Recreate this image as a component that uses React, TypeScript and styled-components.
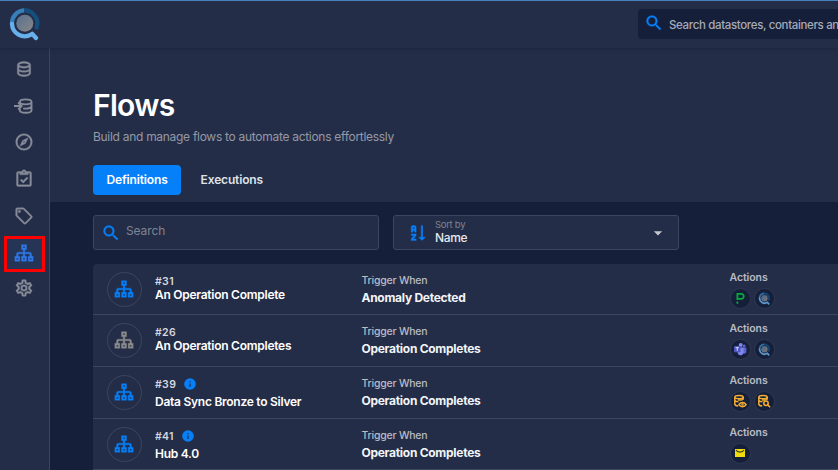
import React from "react";
import styled, { createGlobalStyle, css } from "styled-components";

const color = {
  surface: "#242d48",
  deep: "#161f3a",
  line: "#3c455e",
  blue: "#0580f9",
  grey: "#868b98",
};

const GlobalStyle = createGlobalStyle`
  *, *::before, *::after { box-sizing: border-box; }
  body {
    margin: 0;
    overflow: hidden;
    background: ${color.deep};
    color: #fff;
    font-family: Inter, "Noto Sans", sans-serif;
  }
  svg { flex-shrink: 0; }
`;

const Page = styled.div`
  display: flex;
  flex-direction: column;
  width: 100vw;
  height: 100vh;
  overflow: hidden;
`;

const Header = styled.header`
  display: flex;
  flex: 0 0 48px;
  align-items: flex-start;
  justify-content: space-between;
  background: ${color.surface};
  border-top: 1px solid #4a80bb;
  box-shadow: 0 1px 4px rgba(15, 20, 40, 0.35);
  z-index: 1;
`;

const LogoSlot = styled.div`
  display: flex;
  padding: 6px 0 0 8px;
`;

const GlobalSearch = styled.div`
  display: flex;
  align-items: center;
  width: 200px;
  height: 30px;
  margin-top: 8px;
  padding-left: 6px;
  overflow: hidden;
  border-radius: 4px 0 0 4px;
  background: ${color.deep};
  color: #a6abb8;
  font-size: 11.5px;
  font-weight: 500;
  letter-spacing: -0.35px;
  line-height: 16px;
  white-space: nowrap;

  svg { margin: -2px 5px 0 0; }
  span { padding-top: 2px; }
`;

const Body = styled.div`
  display: flex;
  flex: 1;
  min-height: 0;
`;

const Sidebar = styled.nav`
  display: flex;
  flex: 0 0 50px;
  flex-direction: column;
  align-items: center;
  padding-top: 2.5px;
  background: ${color.surface};
  border-right: 1px solid ${color.line};
`;

const NavItem = styled.a<{ $active?: boolean }>`
  display: flex;
  align-items: center;
  justify-content: center;
  width: 41px;
  height: 36.7px;
  color: ${(p) => (p.$active ? "#2f78ea" : color.grey)};

  svg {
    margin-right: 1px;
    stroke: currentColor;
    stroke-width: 0.4;
  }
  ${(p) =>
    p.$active &&
    css`
      height: 36px;
      margin: 2px 0 -2px;
      padding-bottom: 2px;
      border: 3px solid #fe0000;
      background: #263555;
    `}
`;

const Main = styled.main`
  display: flex;
  flex: 1;
  flex-direction: column;
  min-width: 0;
`;

const Hero = styled.section`
  flex: 0 0 154px;
  padding: 40px 0 0 43px;
  background: ${color.surface};
`;

const Title = styled.h1`
  margin: 0;
  font-size: 30px;
  font-weight: 600;
  letter-spacing: -0.7px;
  line-height: 34px;
`;

const Subtitle = styled.p`
  margin: 6px 0 0;
  color: #9499a5;
  font-size: 12px;
  letter-spacing: -0.29px;
  line-height: 18px;
`;

const Tabs = styled.div`
  display: flex;
  gap: 6px;
  margin-top: 19px;
`;

const Tab = styled.button<{ $active?: boolean }>`
  height: 30px;
  padding: 0 13.5px;
  border: 0;
  border-radius: 4px;
  background: ${(p) => (p.$active ? color.blue : "transparent")};
  color: ${(p) => (p.$active ? "#fff" : "#dfe2e8")};
  font: 600 12px/30px Inter, sans-serif;
  letter-spacing: -0.15px;
`;

const Content = styled.section`
  display: flex;
  flex: 1;
  flex-direction: column;
  min-height: 0;
  padding: 13px 0 0 43px;
`;

const Filters = styled.div`
  display: flex;
  gap: 14px;
`;

const Field = styled.div`
  display: flex;
  align-items: center;
  width: 286px;
  height: 35px;
  border: 1px solid ${color.line};
  border-radius: 3px;
  background: ${color.surface};
`;

const SearchField = styled(Field)`
  padding-left: 7px;
  color: #7f8492;
  font-size: 12px;
  letter-spacing: -0.1px;

  svg { margin-right: 5px; }
  span { margin-top: -4px; }
`;

const SortField = styled(Field)`
  padding: 0 10px 0 13px;
  color: #c3c7cf;
`;

const SortText = styled.div`
  display: flex;
  flex: 1;
  flex-direction: column;
  padding: 0 0 1px 8px;
`;

const SortLabel = styled.span`
  color: #7f8492;
  font-size: 9.5px;
  letter-spacing: -0.3px;
  line-height: 12px;
`;

const SortValue = styled.span`
  color: #e6e8ec;
  font-size: 12px;
  font-weight: 500;
  letter-spacing: -0.35px;
  line-height: 14px;
`;

const List = styled.div`
  display: flex;
  flex-direction: column;
  margin-top: 14px;
  border-radius: 4px 0 0 0;
  background: ${color.surface};
`;

const Row = styled.div<{ $height: number }>`
  display: grid;
  grid-template-columns: 48px 206.5px 368px 1fr;
  flex: 0 0 ${(p) => p.$height}px;
  height: ${(p) => p.$height}px;
  padding-left: 14px;
  border-bottom: 1px solid ${color.line};
`;

const FlowBadge = styled.div<{ $muted?: boolean }>`
  display: flex;
  align-items: center;
  justify-content: center;
  width: 35px;
  height: 35px;
  align-self: center;
  border: 1px solid ${color.line};
  border-radius: 50%;
  color: ${(p) => (p.$muted ? "#8b8b8b" : color.blue)};

  svg {
    margin: -1px 1px 0 0;
    stroke: currentColor;
    stroke-width: 0.4;
  }
`;

const FlowText = styled.div<{ $info?: boolean }>`
  display: flex;
  flex-direction: column;
  gap: ${(p) => (p.$info ? 3.5 : 0)}px;
  padding-top: 11px;
`;

const FlowId = styled.div`
  display: flex;
  gap: 7px;
  height: 13px;
  color: #d5d8de;
  font-size: 10.5px;
  font-weight: 600;
  letter-spacing: 0.35px;
  line-height: 14px;

  svg { margin-top: -1.5px; }
`;

const FlowName = styled.div`
  font-size: 12px;
  font-weight: 600;
  letter-spacing: -0.26px;
  line-height: 13px;
  white-space: nowrap;
`;

const Trigger = styled.div`
  padding-top: 9px;
  white-space: nowrap;
`;

const Label = styled.div<{ $tight?: boolean }>`
  color: #b7bbc4;
  font-size: 10.5px;
  font-weight: ${(p) => (p.$tight ? 500 : 600)};
  letter-spacing: ${(p) => (p.$tight ? -0.22 : -0.08)}px;
  line-height: 15px;
`;

const TriggerValue = styled.div`
  margin-top: 2px;
  color: #f3f4f6;
  font-size: 12px;
  font-weight: 700;
  letter-spacing: -0.28px;
  line-height: 16px;
`;

const Actions = styled.div`
  padding-top: 5.5px;
`;

const ActionList = styled.div`
  display: flex;
  gap: 3px;
  margin-top: 3px;
`;

const ActionBadge = styled.div`
  display: flex;
  align-items: center;
  justify-content: center;
  width: 21px;
  height: 21px;
  border: 1px solid #303950;
  border-radius: 50%;
  background: ${color.deep};
`;

const paths = {
  database:
    "M12 3C7.58 3 4 4.79 4 7V17C4 19.21 7.59 21 12 21S20 19.21 20 17V7C20 4.79 16.42 3 12 3M18 17C18 17.5 15.87 19 12 19S6 17.5 6 17V14.77C7.61 15.55 9.72 16 12 16S16.39 15.55 18 14.77V17M18 12.45C16.7 13.4 14.42 14 12 14C9.58 14 7.3 13.4 6 12.45V9.64C7.47 10.47 9.61 11 12 11C14.39 11 16.53 10.47 18 9.64V12.45M12 9C8.13 9 6 7.5 6 7S8.13 5 12 5C15.87 5 18 6.5 18 7S15.87 9 12 9Z",
  compass:
    "M7,17L10.2,10.2L17,7L13.8,13.8L7,17M12,11.1A0.9,0.9 0 0,0 11.1,12A0.9,0.9 0 0,0 12,12.9A0.9,0.9 0 0,0 12.9,12A0.9,0.9 0 0,0 12,11.1M12,2A10,10 0 0,1 22,12A10,10 0 0,1 12,22A10,10 0 0,1 2,12A10,10 0 0,1 12,2M12,4A8,8 0 0,0 4,12A8,8 0 0,0 12,20A8,8 0 0,0 20,12A8,8 0 0,0 12,4Z",
  clipboard:
    "M19,3H14.82C14.4,1.84 13.3,1 12,1C10.7,1 9.6,1.84 9.18,3H5A2,2 0 0,0 3,5V19A2,2 0 0,0 5,21H19A2,2 0 0,0 21,19V5A2,2 0 0,0 19,3M12,3A1,1 0 0,1 13,4A1,1 0 0,1 12,5A1,1 0 0,1 11,4A1,1 0 0,1 12,3M7,7H17V5H19V19H5V5H7V7M7.5,13.5L9,12L11,14L15.5,9.5L17,11L11,17L7.5,13.5Z",
  tag: "M21.41 11.58L12.41 2.58A2 2 0 0 0 11 2H4A2 2 0 0 0 2 4V11A2 2 0 0 0 2.59 12.42L11.59 21.42A2 2 0 0 0 13 22A2 2 0 0 0 14.41 21.41L21.41 14.41A2 2 0 0 0 22 13A2 2 0 0 0 21.41 11.58M13 20L4 11V4H11L20 13M6.5 5A1.5 1.5 0 1 1 5 6.5A1.5 1.5 0 0 1 6.5 5Z",
  sitemap:
    "M9 2V8H11V11H5C3.89 11 3 11.89 3 13V16H1V22H7V16H5V13H11V16H9V22H15V16H13V13H19V16H17V22H23V16H21V13C21 11.89 20.11 11 19 11H13V8H15V2H9M11 4H13V6H11V4M3 18H5V20H3V18M11 18H13V20H11V18M19 18H21V20H19V18Z",
  cog: "M12,8A4,4 0 0,1 16,12A4,4 0 0,1 12,16A4,4 0 0,1 8,12A4,4 0 0,1 12,8M12,10A2,2 0 0,0 10,12A2,2 0 0,0 12,14A2,2 0 0,0 14,12A2,2 0 0,0 12,10M10,22C9.75,22 9.54,21.82 9.5,21.58L9.13,18.93C8.5,18.68 7.96,18.34 7.44,17.94L4.95,18.95C4.73,19.03 4.46,18.95 4.34,18.73L2.34,15.27C2.21,15.05 2.27,14.78 2.46,14.63L4.57,12.97L4.5,12L4.57,11L2.46,9.37C2.27,9.22 2.21,8.95 2.34,8.73L4.34,5.27C4.46,5.05 4.73,4.96 4.95,5.05L7.44,6.05C7.96,5.66 8.5,5.32 9.13,5.07L9.5,2.42C9.54,2.18 9.75,2 10,2H14C14.25,2 14.46,2.18 14.5,2.42L14.87,5.07C15.5,5.32 16.04,5.66 16.56,6.05L19.05,5.05C19.27,4.96 19.54,5.05 19.66,5.27L21.66,8.73C21.79,8.95 21.73,9.22 21.54,9.37L19.43,11L19.5,12L19.43,13L21.54,14.63C21.73,14.78 21.79,15.05 21.66,15.27L19.66,18.73C19.54,18.95 19.27,19.04 19.05,18.95L16.56,17.95C16.04,18.34 15.5,18.68 14.87,18.93L14.5,21.58C14.46,21.82 14.25,22 14,22H10M11.25,4L10.88,6.61C9.68,6.86 8.62,7.5 7.85,8.39L5.44,7.35L4.69,8.65L6.8,10.2C6.4,11.37 6.4,12.64 6.8,13.8L4.68,15.36L5.43,16.66L7.86,15.62C8.63,16.5 9.68,17.14 10.87,17.38L11.24,20H12.76L13.13,17.39C14.32,17.14 15.37,16.5 16.14,15.62L18.57,16.66L19.32,15.36L17.2,13.81C17.6,12.64 17.6,11.37 17.2,10.2L19.31,8.65L18.56,7.35L16.15,8.39C15.38,7.5 14.32,6.86 13.12,6.62L12.75,4H11.25Z",
  magnify:
    "M9.5,3A6.5,6.5 0 0,1 16,9.5C16,11.11 15.41,12.59 14.44,13.73L14.71,14H15.5L20.5,19L19,20.5L14,15.5V14.71L13.73,14.44C12.59,15.41 11.11,16 9.5,16A6.5,6.5 0 0,1 3,9.5A6.5,6.5 0 0,1 9.5,3M9.5,5C7,5 5,7 5,9.5C5,12 7,14 9.5,14C12,14 14,12 14,9.5C14,7 12,5 9.5,5Z",
  sort: "M19 17H22L18 21L14 17H17V3H19M11 13V15L7.67 19H11V21H5V19L8.33 15H5V13M9 3H7C5.9 3 5 3.9 5 5V11H7V9H9V11H11V5C11 3.9 10.11 3 9 3M9 7H7V5H9Z",
  info: "M13,9H11V7H13M13,17H11V11H13M12,2A10,10 0 0,0 2,12A10,10 0 0,0 12,22A10,10 0 0,0 22,12A10,10 0 0,0 12,2Z",
  menuDown: "M7,10L12,15L17,10H7Z",
};

interface IconProps {
  name: keyof typeof paths;
  size: number;
  fill?: string;
  weight?: number;
}

function Icon({ name, size, fill = "currentColor", weight = 0 }: IconProps) {
  return (
    <svg width={size} height={size} viewBox="0 0 24 24" fill={fill} stroke={weight ? fill : "none"} strokeWidth={weight}>
      <path d={paths[name]} />
    </svg>
  );
}

function DatabaseImport() {
  return (
    <svg width="20" height="20" viewBox="0 0 24 24" fill="none">
      <g strokeWidth="2.300">
        <path d="M7 8.600V7c0-1.700 3-3 7-3s7 1.300 7 3v10c0 1.700-3 3-7 3s-7-1.300-7-3v-1.500M7 7c0 1.700 3 3 7 3s7-1.300 7-3M11 14.900c1 .2 2 .2 3 .2 3.200 0 5.800-.7 7-2.300" />
        <path d="M-1 12h10M5 7.800 9.200 12 5 16.200" />
      </g>
    </svg>
  );
}

function Logo({ size, small }: { size: number; small?: boolean }) {
  const id = `disc-${size}`;
  const ring = small ? 4.6 : 4.3;
  return (
    <svg width={size} height={size} viewBox="0 0 34 34" fill="none" opacity={small ? 0.85 : 1}>
      <defs>
        <linearGradient id={id} x1="0" y1="0" x2="1" y2="1">
          <stop offset="0" stopColor="#56708f" />
          <stop offset="1" stopColor="#898788" />
        </linearGradient>
      </defs>
      <path d="M15.500 3.500a13 13 0 0 1 13.200 17" stroke="#154f7e" strokeWidth={ring} strokeLinecap="round" />
      <path d="M4 17A12.800 12.800 0 0 1 16 3.400" stroke="#387eb8" strokeWidth={ring} />
      <path d="M4 17a12.800 12.800 0 0 0 19 10.700l1.300-.9 3.700 4.200" stroke="#68b0ec" strokeWidth={ring} strokeLinecap="round" strokeLinejoin="round" />
      <circle cx="16.800" cy="16.200" r="8.500" fill={`url(#${id})`} />
    </svg>
  );
}

function PagerDuty() {
  return (
    <svg width="9" height="13" viewBox="0 0 9 13" fill="none" stroke="#08a83c" strokeWidth="1.800">
      <path d="M1.400 7.900V1.900h3.900a2.400 2.400 0 0 1 0 4.900H1.400M1.400 9.500v2.300" />
    </svg>
  );
}

function Teams() {
  return (
    <svg width="14" height="14" viewBox="0 0 14 14">
      <circle cx="11.200" cy="4" r="1.400" fill="#5b63c9" />
      <circle cx="7.700" cy="3" r="2" fill="#7f88ec" />
      <path d="M9.500 5.600h3.900v3.500a2 2 0 0 1-3.900 1z" fill="#5c64cc" />
      <path d="M4.600 5.600h6v4a3.100 3.100 0 0 1-6 1.500z" fill="#7d86ec" />
      <rect x="1" y="4" width="6.500" height="6.300" rx=".6" fill="#4c54bd" />
      <path d="M2.600 5.700h3.300M4.250 5.700v3.200" stroke="#e3e5ff" strokeWidth=".9" />
    </svg>
  );
}

function DatabaseTool({ kind }: { kind: "eye" | "search" }) {
  return (
    <svg width="14" height="14" viewBox="0 0 14 14" fill="none" stroke="#f5ae33" strokeWidth="1.500">
      <ellipse cx="6" cy="3.100" rx="4.200" ry="1.700" />
      <path d="M1.800 3v7c0 1 1.500 1.800 3.400 1.900M10.200 3v2.600M1.800 6.400c.5.900 1.800 1.400 3.600 1.400M5 5.900c2.600.3 4.600-.3 5.200-1" />
      {kind === "eye" ? (
        <>
          <path d="M5.900 10.600c1.700-2.700 5.500-2.700 7.200 0-1.700 2.700-5.500 2.700-7.200 0z" />
          <circle cx="9.500" cy="10.600" r=".5" />
        </>
      ) : (
        <>
          <circle cx="9" cy="9.200" r="2.200" />
          <path d="m10.700 10.900 2.500 2.400" />
        </>
      )}
    </svg>
  );
}

function Mail() {
  return (
    <svg width="12" height="10" viewBox="0 0 12 10" fill="none">
      <rect x="1" y="1" width="10" height="8" fill="#f2db0c" />
      <path d="M2 2c1.200 2.800 6.800 2.800 8 0" stroke="#3c421f" strokeWidth="1.100" />
    </svg>
  );
}

const actionIcons = {
  pager: <PagerDuty />,
  teams: <Teams />,
  qualytics: <Logo size={13} small />,
  view: <DatabaseTool kind="eye" />,
  scan: <DatabaseTool kind="search" />,
  mail: <Mail />,
};

interface Flow {
  id: string;
  name: string;
  trigger: string;
  actions: (keyof typeof actionIcons)[];
  height: number;
  info?: boolean;
  muted?: boolean;
}

const flows: Flow[] = [
  { id: "#31", name: "An Operation Complete", trigger: "Anomaly Detected", actions: ["pager", "qualytics"], height: 51 },
  { id: "#26", name: "An Operation Completes", trigger: "Operation Completes", actions: ["teams", "qualytics"], height: 52, muted: true },
  { id: "#39", name: "Data Sync Bronze to Silver", trigger: "Operation Completes", actions: ["view", "scan"], height: 52, info: true },
  { id: "#41", name: "Hub 4.0", trigger: "Operation Completes", actions: ["mail"], height: 51, info: true },
];

export default function App() {
  return (
    <Page>
      <GlobalStyle />
      <Header>
        <LogoSlot>
          <Logo size={34} />
        </LogoSlot>
        <GlobalSearch>
          <Icon name="magnify" size={20} fill={color.blue} weight={0.4} />
          <span>Search datastores, containers an</span>
        </GlobalSearch>
      </Header>
      <Body>
        <Sidebar>
          <NavItem><Icon name="database" size={20} /></NavItem>
          <NavItem><DatabaseImport /></NavItem>
          <NavItem><Icon name="compass" size={20} /></NavItem>
          <NavItem><Icon name="clipboard" size={20} /></NavItem>
          <NavItem><Icon name="tag" size={20} /></NavItem>
          <NavItem $active><Icon name="sitemap" size={20} /></NavItem>
          <NavItem><Icon name="cog" size={20} /></NavItem>
        </Sidebar>
        <Main>
          <Hero>
            <Title>Flows</Title>
            <Subtitle>Build and manage flows to automate actions effortlessly</Subtitle>
            <Tabs>
              <Tab $active>Definitions</Tab>
              <Tab>Executions</Tab>
            </Tabs>
          </Hero>
          <Content>
            <Filters>
              <SearchField>
                <Icon name="magnify" size={20} fill={color.blue} weight={0.4} />
                <span>Search</span>
              </SearchField>
              <SortField>
                <Icon name="sort" size={20} fill={color.blue} weight={0.4} />
                <SortText>
                  <SortLabel>Sort by</SortLabel>
                  <SortValue>Name</SortValue>
                </SortText>
                <Icon name="menuDown" size={20} />
              </SortField>
            </Filters>
            <List>
              {flows.map((flow) => (
                <Row key={flow.id} $height={flow.height}>
                  <FlowBadge $muted={flow.muted}>
                    <Icon name="sitemap" size={20} />
                  </FlowBadge>
                  <FlowText $info={flow.info}>
                    <FlowId>
                      {flow.id}
                      {flow.info && <Icon name="info" size={14} fill={color.blue} />}
                    </FlowId>
                    <FlowName>{flow.name}</FlowName>
                  </FlowText>
                  <Trigger>
                    <Label $tight>Trigger When</Label>
                    <TriggerValue>{flow.trigger}</TriggerValue>
                  </Trigger>
                  <Actions>
                    <Label>Actions</Label>
                    <ActionList>
                      {flow.actions.map((action) => (
                        <ActionBadge key={action}>{actionIcons[action]}</ActionBadge>
                      ))}
                    </ActionList>
                  </Actions>
                </Row>
              ))}
            </List>
          </Content>
        </Main>
      </Body>
    </Page>
  );
}
